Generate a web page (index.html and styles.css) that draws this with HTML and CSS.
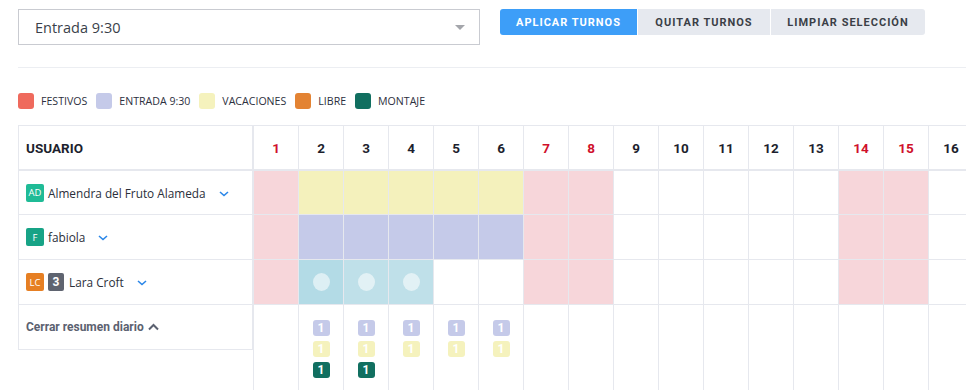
FILE: index.html
```html
<!DOCTYPE html>
<html lang="es">
<head>
<meta charset="utf-8">
<title>Turnos</title>
<link rel="stylesheet" href="styles.css">
</head>
<body>
<div class="page">
  <div class="toolbar">
    <div class="select">
      <span class="select-text">Entrada 9:30</span>
      <span class="select-arrow"></span>
    </div>
    <div class="btn-group">
      <button class="btn btn-primary">APLICAR TURNOS</button>
      <button class="btn">QUITAR TURNOS</button>
      <button class="btn">LIMPIAR SELECCIÓN</button>
    </div>
  </div>
  <div class="divider"></div>
  <div class="legend">
    <div class="legend-item"><span class="sw sw-fest"></span>FESTIVOS</div>
    <div class="legend-item"><span class="sw sw-ent"></span>ENTRADA 9:30</div>
    <div class="legend-item"><span class="sw sw-vac"></span>VACACIONES</div>
    <div class="legend-item"><span class="sw sw-lib"></span>LIBRE</div>
    <div class="legend-item"><span class="sw sw-mon"></span>MONTAJE</div>
  </div>

  <div class="grid">
    <!-- header -->
    <div class="cell user head-user">USUARIO</div>
    <div class="cell day head first red">1</div>
    <div class="cell day head">2</div>
    <div class="cell day head">3</div>
    <div class="cell day head">4</div>
    <div class="cell day head">5</div>
    <div class="cell day head">6</div>
    <div class="cell day head red">7</div>
    <div class="cell day head red">8</div>
    <div class="cell day head">9</div>
    <div class="cell day head">10</div>
    <div class="cell day head">11</div>
    <div class="cell day head">12</div>
    <div class="cell day head">13</div>
    <div class="cell day head red">14</div>
    <div class="cell day head red">15</div>
    <div class="cell day head">16</div>

    <!-- row 1 -->
    <div class="cell user">
      <span class="avatar av-ad">AD</span>
      <span class="name">Almendra del Fruto Alameda</span>
      <svg class="chev" width="10" height="6" viewBox="0 0 10 6"><path d="M1 1l4 3.5L9 1" fill="none" stroke="#2a86e8" stroke-width="1.6"/></svg>
    </div>
    <div class="cell day first fest"></div>
    <div class="cell day vac"></div>
    <div class="cell day vac"></div>
    <div class="cell day vac"></div>
    <div class="cell day vac"></div>
    <div class="cell day vac"></div>
    <div class="cell day fest"></div>
    <div class="cell day fest"></div>
    <div class="cell day"></div>
    <div class="cell day"></div>
    <div class="cell day"></div>
    <div class="cell day"></div>
    <div class="cell day"></div>
    <div class="cell day fest"></div>
    <div class="cell day fest"></div>
    <div class="cell day"></div>

    <!-- row 2 -->
    <div class="cell user">
      <span class="avatar av-f">F</span>
      <span class="name">fabiola</span>
      <svg class="chev" width="10" height="6" viewBox="0 0 10 6"><path d="M1 1l4 3.5L9 1" fill="none" stroke="#2a86e8" stroke-width="1.6"/></svg>
    </div>
    <div class="cell day first fest"></div>
    <div class="cell day ent"></div>
    <div class="cell day ent"></div>
    <div class="cell day ent"></div>
    <div class="cell day ent"></div>
    <div class="cell day ent"></div>
    <div class="cell day fest"></div>
    <div class="cell day fest"></div>
    <div class="cell day"></div>
    <div class="cell day"></div>
    <div class="cell day"></div>
    <div class="cell day"></div>
    <div class="cell day"></div>
    <div class="cell day fest"></div>
    <div class="cell day fest"></div>
    <div class="cell day"></div>

    <!-- row 3 -->
    <div class="cell user">
      <span class="avatar av-lc">LC</span>
      <span class="count">3</span>
      <span class="name">Lara Croft</span>
      <svg class="chev" width="10" height="6" viewBox="0 0 10 6"><path d="M1 1l4 3.5L9 1" fill="none" stroke="#2a86e8" stroke-width="1.6"/></svg>
    </div>
    <div class="cell day first fest"></div>
    <div class="cell day sel sel-a"><span class="dot"></span></div>
    <div class="cell day sel"><span class="dot"></span></div>
    <div class="cell day sel"><span class="dot"></span></div>
    <div class="cell day"></div>
    <div class="cell day"></div>
    <div class="cell day fest"></div>
    <div class="cell day fest"></div>
    <div class="cell day"></div>
    <div class="cell day"></div>
    <div class="cell day"></div>
    <div class="cell day"></div>
    <div class="cell day"></div>
    <div class="cell day fest"></div>
    <div class="cell day fest"></div>
    <div class="cell day"></div>

    <!-- summary -->
    <div class="cell user summary-user">
      <span class="toggle">Cerrar resumen diario</span>
      <svg class="caret" width="11" height="8" viewBox="0 0 11 8"><path d="M1 6.5l4.5-4.5 4.5 4.5" fill="none" stroke="#5b6170" stroke-width="2"/></svg>
    </div>
    <div class="cell day first summary"></div>
    <div class="cell day summary"><span class="b b-ent">1</span><span class="b b-vac">1</span><span class="b b-mon">1</span></div>
    <div class="cell day summary"><span class="b b-ent">1</span><span class="b b-vac">1</span><span class="b b-mon">1</span></div>
    <div class="cell day summary"><span class="b b-ent">1</span><span class="b b-vac">1</span></div>
    <div class="cell day summary"><span class="b b-ent">1</span><span class="b b-vac">1</span></div>
    <div class="cell day summary"><span class="b b-ent">1</span><span class="b b-vac">1</span></div>
    <div class="cell day summary"></div>
    <div class="cell day summary"></div>
    <div class="cell day summary"></div>
    <div class="cell day summary"></div>
    <div class="cell day summary"></div>
    <div class="cell day summary"></div>
    <div class="cell day summary"></div>
    <div class="cell day summary"></div>
    <div class="cell day summary"></div>
    <div class="cell day summary"></div>
  </div>
</div>
</body>
</html>
```

FILE: styles.css
```css
* { box-sizing: border-box; }
html, body { margin: 0; padding: 0; background: #fff; overflow: hidden; }
body { font-family: "Open Sans", "Noto Sans", sans-serif; color: #333; }

.page { padding: 9px 0 0 18px; width: 966px; overflow: hidden; }

.toolbar { display: flex; align-items: flex-start; gap: 20px; }

.select {
  width: 462px; height: 36px;
  border: 1px solid #c9cbd1;
  display: flex; align-items: center; justify-content: space-between;
  padding: 0 14px 0 16px;
}
.select-text { font-size: 14.5px; color: #3a3f4a; }
.select-arrow {
  width: 0; height: 0;
  border-left: 5px solid transparent; border-right: 5px solid transparent;
  border-top: 5px solid #a4a6ab;
  margin-top: 1px;
}

.btn-group { display: flex; gap: 1px; }
.btn {
  font-family: Roboto, "Noto Sans", sans-serif;
  font-weight: 700; font-size: 11px; letter-spacing: 1px;
  height: 26px; border: 0; margin: 0;
  background: #e6e9ef; color: #3b3f47;
  padding: 0 16px;
  cursor: pointer;
}
.btn:first-child { border-radius: 3px 0 0 3px; }
.btn:last-child { border-radius: 0 3px 3px 0; }
.btn-primary { background: #3d9ef8; color: #fff; width: 137px; }
.btn-group .btn:nth-child(2) { width: 132px; }
.btn-group .btn:nth-child(3) { width: 154px; }

.divider { height: 1px; background: #eceef2; margin-top: 22px; }

.legend { display: flex; align-items: center; margin-top: 25px; height: 16px; }
.legend-item {
  display: flex; align-items: center;
  font-size: 10.6px; color: #2d3040; text-transform: uppercase;
  margin-right: 9px;
}
.sw { width: 16px; height: 16px; border-radius: 3px; margin-right: 7px; display: inline-block; }
.sw-fest { background: #ef6a5d; }
.sw-ent { background: #c5cae9; }
.sw-vac { background: #f5f2bd; }
.sw-lib { background: #e38333; }
.sw-mon { background: #116f60; }

.grid {
  margin-top: 16px;
  display: grid;
  grid-template-columns: 235px 46px repeat(15, 45px);
  grid-template-rows: 46px 44px 45px 45px 86px;
}

.cell { border-right: 1px solid #e6e8ee; border-bottom: 1px solid #e6e8ee; }
.head, .head-user { border-top: 1px solid #e6e8ee; border-bottom-width: 2px; }
.user { border-left: 1px solid #e6e8ee; display: flex; align-items: center; padding-left: 7px; }
.first { border-left: 1px solid #e6e8ee; }

.head-user {
  font-family: Roboto, "Noto Sans", sans-serif;
  font-weight: 700; font-size: 13.5px; color: #1d1f2e;
}
.day.head {
  display: flex; align-items: center; justify-content: center;
  font-family: Roboto, "Noto Sans", sans-serif;
  font-weight: 700; font-size: 13.5px; color: #1d1f2e;
}
.day.head.red { color: #d0112b; }

.avatar {
  width: 18px; height: 18px; border-radius: 2px;
  color: #fff; font-size: 9.5px;
  display: inline-flex; align-items: center; justify-content: center;
  margin-right: 4px;
}
.av-ad { background: #1fbb96; }
.av-f { background: #17a386; }
.av-lc { background: #e67f23; }
.count {
  width: 16px; height: 18px; border-radius: 2px;
  background: #5f6470; color: #fff;
  font-family: Roboto, sans-serif; font-weight: 700; font-size: 12px;
  display: inline-flex; align-items: center; justify-content: center;
  margin-right: 5px;
}
.name { font-size: 11.8px; color: #2b2f3a; }
.chev { margin-left: 13px; margin-top: 2px; }

.fest { background: #f7d6da; }
.vac { background: #f4f1bc; }
.ent { background: #c5cae9; }
.sel { background: #bfe0e9; display: flex; align-items: center; justify-content: center; }
.sel-a { background: #b3dbe6; }
.dot { width: 17px; height: 18px; border-radius: 50%; background: rgba(255,255,255,0.55); }

.summary-user { align-self: start; height: 45px; }
.toggle {
  font-family: Roboto, "Noto Sans", sans-serif;
  font-weight: 700; font-size: 12px; color: #5b6170;
}
.caret { margin-left: 4px; }

.summary {
  border-bottom: 0;
  display: flex; flex-direction: column; align-items: center;
  padding-top: 15px; gap: 5px;
}
.b {
  width: 17px; height: 16px; border-radius: 3px;
  color: #fff; font-family: Roboto, sans-serif; font-weight: 700; font-size: 12px;
  display: flex; align-items: center; justify-content: center;
}
.b-ent { background: #c5cae9; }
.b-vac { background: #f5f2bd; }
.b-mon { background: #116f60; }
```
